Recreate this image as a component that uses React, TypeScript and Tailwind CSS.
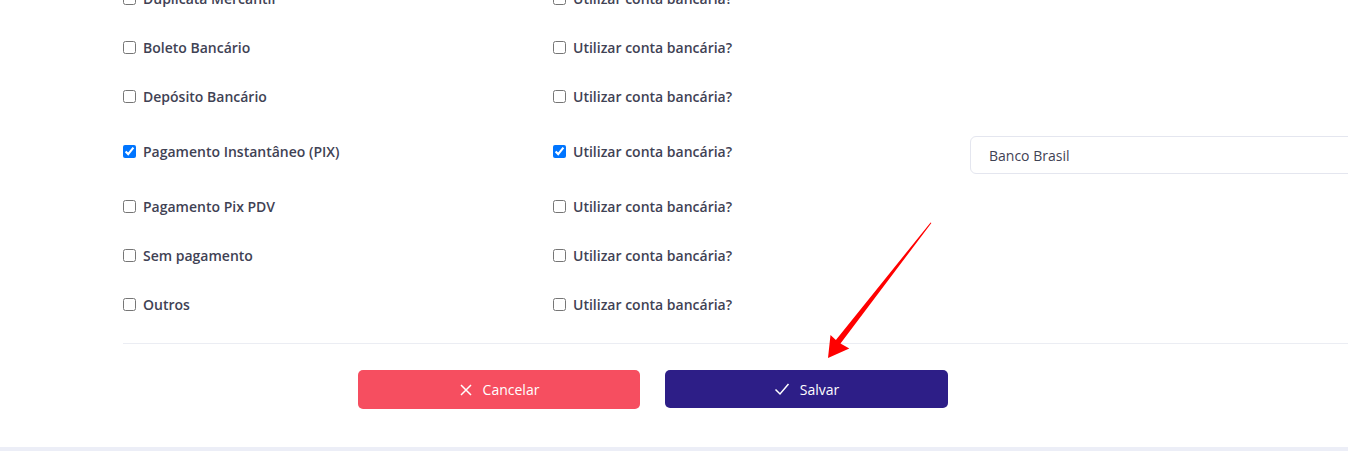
import React from "react";

const rows = [
  { label: "Duplicata Mercantil", checked: false },
  { label: "Boleto Bancário", checked: false },
  { label: "Depósito Bancário", checked: false },
  { label: "Pagamento Instantâneo (PIX)", checked: true, bank: "Banco Brasil" },
  { label: "Pagamento Pix PDV", checked: false },
  { label: "Sem pagamento", checked: false },
  { label: "Outros", checked: false },
];

function Check({ checked, label }: { checked: boolean; label: string }) {
  return (
    <label className="flex items-center gap-[7px] text-[14px] font-semibold text-[#3f4254]">
      <input type="checkbox" defaultChecked={checked} className="m-0 w-[13px] h-[13px]" />
      <span>{label}</span>
    </label>
  );
}

export default function App() {
  return (
    <div
      className="relative w-full h-[451px] overflow-hidden bg-white"
      style={{ fontFamily: "'Open Sans', sans-serif" }}
    >
      <div className="w-[1500px] -mt-[26px] pl-[123px]">
        {rows.map((r) => (
          <div
            key={r.label}
            className={
              "grid grid-cols-[430px_417px_1fr] items-center " +
              (r.bank ? "h-[61px]" : "h-[49px]")
            }
          >
            <Check checked={r.checked} label={r.label} />
            <Check checked={r.checked} label="Utilizar conta bancária?" />
            <div>
              {r.bank && (
                <div className="mt-[7px] h-[38px] w-[500px] rounded-[6px] border border-[#e4e6ef] flex items-center px-[18px] text-[14px] text-[#3f4254]">
                  {r.bank}
                </div>
              )}
            </div>
          </div>
        ))}
        <div className="mt-[14px] border-t border-[#ebedf3]" />
      </div>

      <div className="flex gap-[25px] pl-[358px] mt-[26px]">
        <button className="w-[282px] h-[39px] rounded-[5px] bg-[#f64e60] text-white text-[14px] flex items-center justify-center gap-[10px]">
          <svg width="14" height="14" viewBox="0 0 14 14" fill="none" stroke="white" strokeWidth="1.5">
            <path d="M2 2l10 10M12 2L2 12" />
          </svg>
          Cancelar
        </button>
        <button className="w-[283px] h-[38px] rounded-[5px] bg-[#2d1e87] text-white text-[14px] font-medium flex items-center justify-center gap-[10px]">
          <svg width="16" height="14" viewBox="0 0 16 14" fill="none" stroke="white" strokeWidth="1.5">
            <path d="M1.5 7.5l4.5 4.5L14.5 2" />
          </svg>
          Salvar
        </button>
      </div>

      <div className="absolute left-0 right-0 bottom-0 h-[4px] bg-[#eceef7]" />

      <svg className="absolute left-0 top-0 pointer-events-none" width="1348" height="451">
        <polygon
          points="930.6,222.4 931.4,223 840.5,343.6 849.3,348.4 828,358 830.5,335 835.9,340"
          fill="#ff0000"
        />
      </svg>
    </div>
  );
}
